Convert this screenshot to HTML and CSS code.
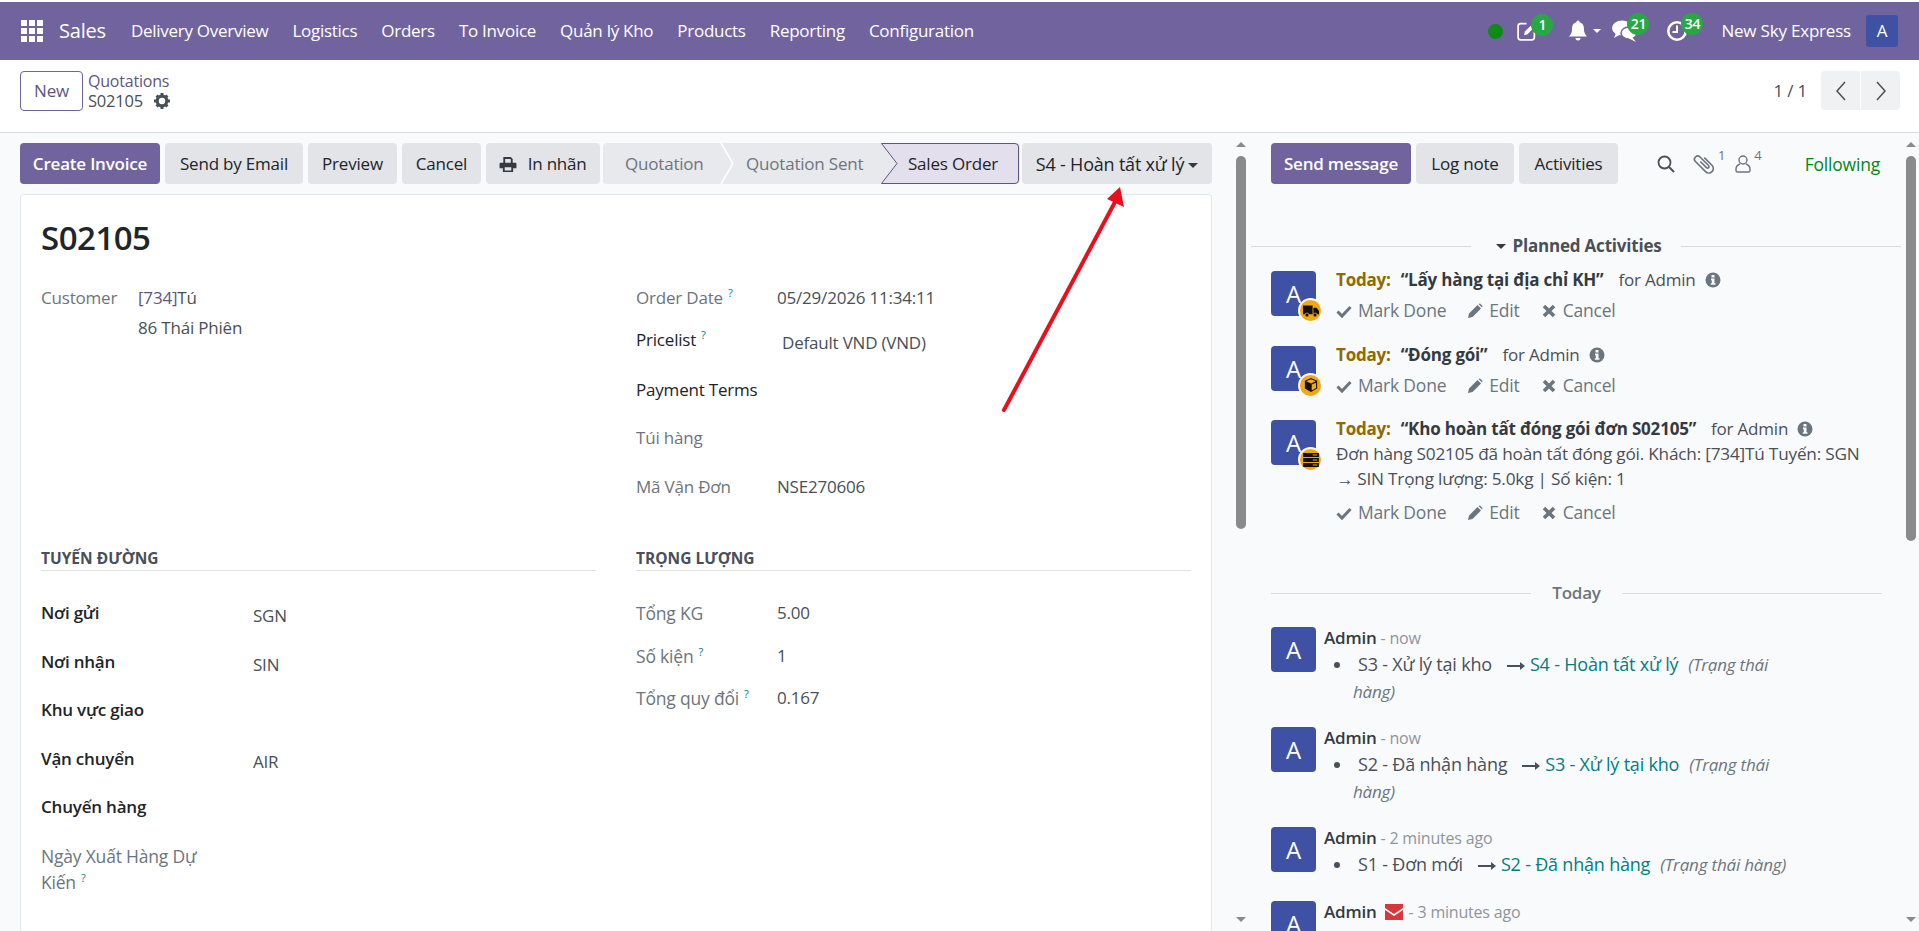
FILE: index.html
```html
<!DOCTYPE html>
<html lang="vi">
<head>
    <meta charset="UTF-8">
    <title>S02105 - Sales</title>
    <link rel="stylesheet" href="styles.css">
</head>
<body>

<svg class="defs" width="0" height="0">
    <symbol id="i-check" viewBox="0 0 16 16"><path d="M1.5 8.5 L6 13 L14.5 4" fill="none" stroke="currentColor" stroke-width="3"/></symbol>
    <symbol id="i-pencil" viewBox="0 0 16 16"><path d="M1 15 L2 10.5 L10.5 2 L14 5.5 L5.5 14 Z M11.5 1 L13 0.5 L15.5 3 L15 4.5 Z" fill="currentColor"/></symbol>
    <symbol id="i-times" viewBox="0 0 16 16"><path d="M3 3 L13 13 M13 3 L3 13" fill="none" stroke="currentColor" stroke-width="3.6"/></symbol>
    <symbol id="i-info" viewBox="0 0 16 16"><circle cx="8" cy="8" r="7.5" fill="currentColor"/><path d="M6.5 3h3v2.4h-3z M6 6.6h3.5v4.6h1v1.6H5.8v-1.6h1v-3H6z" fill="#f9fafc"/></symbol>
    <symbol id="i-long-arrow" viewBox="0 0 18 10"><path d="M0 4h13V1l5 4-5 4V6H0z" fill="currentColor"/></symbol>
</svg>

<header class="navbar">
    <div class="nav-left">
        <svg class="apps" viewBox="0 0 22 22"><path d="M0 0h6v6H0z M8 0h6v6H8z M16 0h6v6h-6z M0 8h6v6H0z M8 8h6v6H8z M16 8h6v6h-6z M0 16h6v6H0z M8 16h6v6H8z M16 16h6v6h-6z" fill="#fff"/></svg>
        <span class="brand">Sales</span>
        <a>Delivery Overview</a>
        <a>Logistics</a>
        <a>Orders</a>
        <a>To Invoice</a>
        <a>Quản lý Kho</a>
        <a>Products</a>
        <a>Reporting</a>
        <a>Configuration</a>
    </div>
    <div class="nav-right">
        <span class="presence"></span>
        <span class="systray tray-activity">
            <svg viewBox="0 0 20 20"><path d="M10 2.500H4.500a2.500 2.500 0 0 0-2.500 2.500v10.500a2.500 2.500 0 0 0 2.500 2.500h10.500a2.500 2.500 0 0 0 2.500-2.500V10" fill="none" stroke="#fff" stroke-width="1.600"/><path d="M7.500 13.500 L8.500 10 L14 4.500 L16.500 7 L11 12.500 Z" fill="#fff"/></svg>
            <b class="count">1</b>
        </span>
        <span class="systray tray-bell">
            <svg viewBox="0 0 20 22"><path d="M10 0a1.6 1.6 0 0 1 1.6 1.8C15 2.6 16 5.5 16 9c0 4 2 5.500 3 7H1c1-1.500 3-3 3-7 0-3.500 1-6.400 4.400-7.200A1.600 1.600 0 0 1 10 0z M7.500 17.500h5a2.500 2.500 0 0 1-5 0z" fill="#fff"/></svg>
            <i class="caret-white"></i>
        </span>
        <span class="systray tray-chat">
            <svg viewBox="0 0 26 22"><ellipse cx="10" cy="8" rx="10" ry="7.500" fill="#fff"/><path d="M4 13 L2 18 L9 14z" fill="#fff"/><ellipse cx="17" cy="13" rx="8" ry="6" fill="#fff" stroke="#71639e" stroke-width="1.500"/><path d="M20 17 L24 22 L16 18z" fill="#fff"/></svg>
            <b class="count">21</b>
        </span>
        <span class="systray tray-clock">
            <svg viewBox="0 0 22 22"><circle cx="11" cy="11" r="8.700" fill="none" stroke="#fff" stroke-width="2.600"/><path d="M10 5.500h2v7.500H6.500v-2H10z" fill="#fff"/></svg>
            <b class="count">34</b>
        </span>
        <span class="company">New Sky Express</span>
        <span class="user-avatar">A</span>
    </div>
</header>

<div class="control-panel">
    <button class="btn-new">New</button>
    <div class="breadcrumb">
        <a>Quotations</a>
        <div class="crumb-current">S02105
            <svg class="cog" viewBox="0 0 16 16"><g fill="#495057"><circle cx="8" cy="8" r="4.800" fill="none" stroke="#495057" stroke-width="3.200"/><path d="M6.500 0h3v3h-3z M6.500 13h3v3h-3z M0 6.500h3v3H0z M13 6.500h3v3h-3z M1.500 3.600l2.100-2.100 2.100 2.100-2.100 2.100z M10.300 12.400l2.100-2.100 2.100 2.100-2.100 2.100z M12.400 1.500l2.100 2.100-2.100 2.100-2.100-2.100z M3.600 10.300l2.100 2.100-2.100 2.100-2.100-2.100z"/></g></svg>
        </div>
    </div>
    <div class="pager">
        <span class="pager-value">1 / 1</span>
        <button class="pager-btn"><svg viewBox="0 0 12 20"><path d="M10 1 L2 10 L10 19" fill="none" stroke="#495057" stroke-width="1.500"/></svg></button>
        <button class="pager-btn"><svg viewBox="0 0 12 20"><path d="M2 1 L10 10 L2 19" fill="none" stroke="#495057" stroke-width="1.500"/></svg></button>
    </div>
</div>

<main class="content">
    <section class="form-pane">
        <div class="actions">
            <button class="btn btn-primary btn-invoice">Create Invoice</button>
            <button class="btn btn-email">Send by Email</button>
            <button class="btn btn-preview">Preview</button>
            <button class="btn btn-cancel">Cancel</button>
            <button class="btn btn-print">
                <svg viewBox="0 0 18 16"><path d="M4 0h8l2 2v4h-2V2.500L11 2H6v4H4z M1 6h16a1 1 0 0 1 1 1v5h-3.500v4h-11v-4H0V7a1 1 0 0 1 1-1z M5.500 11v3.500h7V11z" fill="#343a40" fill-rule="evenodd"/></svg>
                In nhãn
            </button>
            <div class="statusbar">
                <svg class="status-shape" viewBox="0 0 417 41"><path d="M118 0 L130 20.500 L118 41" fill="none" stroke="#fff" stroke-width="1.500"/><path d="M278.500 .5 H412 a3.500 3.500 0 0 1 3.500 3.500 V37 a3.500 3.500 0 0 1-3.500 3.500 H278.500 L294 20.500 Z" fill="#e3dfec" stroke="#5f5680"/></svg>
                <span class="status-item status-first">Quotation</span>
                <span class="status-item status-sent">Quotation Sent</span>
                <span class="status-item status-current">Sales Order</span>
            </div>
            <button class="btn btn-stage">S4 - Hoàn tất xử lý<i class="caret"></i></button>
        </div>

        <div class="sheet">
            <h1>S02105</h1>
            <div class="groups groups-top">
                <div class="group">
                    <div class="row">
                        <label class="customer-label muted">Customer</label>
                        <div class="value">
                            <div><span class="value-ref">[734]</span>Tú</div>
                            <div class="address">86 Thái Phiên</div>
                        </div>
                    </div>
                </div>
                <div class="group">
                    <div class="row row-date">
                        <label class="side-label muted">Order Date<sup>?</sup></label>
                        <div class="value">05/29/2026 11:34:11</div>
                    </div>
                    <div class="row row-pricelist">
                        <label class="side-label">Pricelist<sup>?</sup></label>
                        <div class="value value-select">Default VND (VND)</div>
                    </div>
                    <div class="row row-terms">
                        <label class="side-label">Payment Terms</label>
                    </div>
                    <div class="row row-bag">
                        <label class="side-label muted">Túi hàng</label>
                    </div>
                    <div class="row">
                        <label class="side-label muted">Mã Vận Đơn</label>
                        <div class="value">NSE270606</div>
                    </div>
                </div>
            </div>
            <div class="groups">
                <div class="group route">
                    <h2>TUYẾN ĐƯỜNG</h2>
                    <div class="row"><label class="route-label">Nơi gửi</label><div class="value value-low">SGN</div></div>
                    <div class="row"><label class="route-label">Nơi nhận</label><div class="value value-low">SIN</div></div>
                    <div class="row"><label class="route-label">Khu vực giao</label></div>
                    <div class="row"><label class="route-label">Vận chuyển</label><div class="value value-low">AIR</div></div>
                    <div class="row"><label class="route-label">Chuyến hàng</label></div>
                    <div class="row"><label class="route-label muted wrap-label">Ngày Xuất Hàng Dự Kiến<sup>?</sup></label></div>
                </div>
                <div class="group weight">
                    <h2>TRỌNG LƯỢNG</h2>
                    <div class="row"><label class="side-label muted">Tổng KG</label><div class="value">5.00</div></div>
                    <div class="row"><label class="side-label muted">Số kiện<sup>?</sup></label><div class="value">1</div></div>
                    <div class="row"><label class="side-label muted">Tổng quy đổi<sup>?</sup></label><div class="value">0.167</div></div>
                </div>
            </div>
        </div>
    </section>

    <div class="scrollbar scrollbar-form"><i class="arrow-up"></i><span class="thumb"></span><i class="arrow-down"></i></div>

    <aside class="chatter">
        <div class="chatter-top">
            <button class="btn btn-primary btn-send">Send message</button>
            <button class="btn btn-log">Log note</button>
            <button class="btn btn-activities">Activities</button>
            <div class="chatter-tools">
                <svg class="tool-search" viewBox="0 0 18 18"><circle cx="7.500" cy="7.500" r="6" fill="none" stroke="#495057" stroke-width="1.800"/><path d="M12 12 L17 17" stroke="#495057" stroke-width="2"/></svg>
                <svg class="tool-clip" viewBox="-3 -3 24 24"><path transform="rotate(-45 9 9)" d="M8.200 5 V13 a1.400 1.400 0 0 0 2.800 0 V1.800 a3 3 0 0 0-6 0 V15 a4.200 4.200 0 0 0 8.400 0 V5" fill="none" stroke="#6c757d" stroke-width="1.500"/></svg>
                <span class="tool-count">1</span>
                <svg class="tool-person" viewBox="0 0 16 18"><circle cx="8" cy="5" r="4" fill="none" stroke="#6c757d" stroke-width="1.400"/><path d="M5 9 C2.500 10 1 11.500 1 14 V15.500 Q1 17 2.500 17 H13.500 Q15 17 15 15.500 V14 C15 11.500 13.500 10 11 9" fill="none" stroke="#6c757d" stroke-width="1.400"/></svg>
                <span class="tool-count">4</span>
            </div>
            <span class="following">Following</span>
        </div>

        <div class="divider divider-planned"><span><i class="caret caret-dark"></i>Planned Activities</span></div>

        <div class="activity">
            <div class="avatar">A
                <span class="activity-badge"><svg viewBox="0 0 20 16"><path d="M0 1h12v11H0z M13 4h4l3 4v4h-7z" fill="#111"/><circle cx="5" cy="13" r="2.500" fill="#111" stroke="#f3a712"/><circle cx="15" cy="13" r="2.500" fill="#111" stroke="#f3a712"/></svg></span>
            </div>
            <div class="activity-body">
                <div><strong class="today">Today:</strong><strong class="summary">“Lấy hàng tại địa chỉ KH”</strong><span class="assignee">for Admin</span><svg class="info"><use href="#i-info"/></svg></div>
                <div class="activity-actions"><a><svg><use href="#i-check"/></svg>Mark Done</a><a><svg><use href="#i-pencil"/></svg>Edit</a><a><svg><use href="#i-times"/></svg>Cancel</a></div>
            </div>
        </div>
        <div class="activity">
            <div class="avatar">A
                <span class="activity-badge"><svg viewBox="0 0 16 16"><path d="M8 0l7 3v9l-7 4-7-4V3z" fill="#111"/><path d="M2.500 3.800L8 6.200l5.500-2.400L8 1.500z" fill="#f3a712"/><path d="M8.800 7.500v6.800l5-2.900V5.300z" fill="#f3a712"/></svg></span>
            </div>
            <div class="activity-body">
                <div><strong class="today">Today:</strong><strong class="summary">“Đóng gói”</strong><span class="assignee">for Admin</span><svg class="info"><use href="#i-info"/></svg></div>
                <div class="activity-actions"><a><svg><use href="#i-check"/></svg>Mark Done</a><a><svg><use href="#i-pencil"/></svg>Edit</a><a><svg><use href="#i-times"/></svg>Cancel</a></div>
            </div>
        </div>
        <div class="activity activity-long">
            <div class="avatar">A
                <span class="activity-badge"><svg viewBox="0 0 18 16"><path d="M0 0h18v4.500H0z M0 5.700h18v4.600H0z M0 11.500h18V16H0z" fill="#111"/><path d="M11 1.600h5v1.300h-5z M11 7.400h5v1.300h-5z M11 13.100h5v1.300h-5z" fill="#f3a712"/></svg></span>
            </div>
            <div class="activity-body">
                <div><strong class="today">Today:</strong><strong class="summary">“Kho hoàn tất đóng gói đơn S02105”</strong><span class="assignee">for Admin</span><svg class="info"><use href="#i-info"/></svg></div>
                <div class="activity-note">Đơn hàng S02105 đã hoàn tất đóng gói. Khách: [734]Tú Tuyến: SGN → SIN Trọng lượng: 5.0kg | Số kiện: 1</div>
                <div class="activity-actions"><a><svg><use href="#i-check"/></svg>Mark Done</a><a><svg><use href="#i-pencil"/></svg>Edit</a><a><svg><use href="#i-times"/></svg>Cancel</a></div>
            </div>
        </div>

        <div class="divider divider-today"><span>Today</span></div>

        <div class="message">
            <div class="avatar">A</div>
            <div class="message-body">
                <div><strong class="author">Admin</strong><span class="when"> - now</span></div>
                <ul><li><span class="old">S3 - Xử lý tại kho</span><svg class="long-arrow"><use href="#i-long-arrow"/></svg><span class="new">S4 - Hoàn tất xử lý</span><em>(Trạng thái hàng)</em></li></ul>
            </div>
        </div>
        <div class="message">
            <div class="avatar">A</div>
            <div class="message-body">
                <div><strong class="author">Admin</strong><span class="when"> - now</span></div>
                <ul><li><span class="old">S2 - Đã nhận hàng</span><svg class="long-arrow"><use href="#i-long-arrow"/></svg><span class="new">S3 - Xử lý tại kho</span><em>(Trạng thái hàng)</em></li></ul>
            </div>
        </div>
        <div class="message message-short">
            <div class="avatar">A</div>
            <div class="message-body">
                <div><strong class="author">Admin</strong><span class="when"> - 2 minutes ago</span></div>
                <ul><li><span class="old">S1 - Đơn mới</span><svg class="long-arrow"><use href="#i-long-arrow"/></svg><span class="new">S2 - Đã nhận hàng</span><em>(Trạng thái hàng)</em></li></ul>
            </div>
        </div>
        <div class="message">
            <div class="avatar">A</div>
            <div class="message-body">
                <div><strong class="author">Admin</strong><svg class="mail" viewBox="0 0 18 16"><path d="M0 0h18v4l-9 6-9-6z M0 6l9 6 9-6v10H0z" fill="#d9363e"/></svg><span class="when">- 3 minutes ago</span></div>
            </div>
        </div>
    </aside>

    <div class="scrollbar scrollbar-chatter"><i class="arrow-up"></i><span class="thumb"></span><i class="arrow-down"></i></div>
</main>

<svg class="annotation" viewBox="0 0 140 240"><path d="M4 226 L115 18" stroke="#ea0f1c" stroke-width="4" stroke-linecap="round"/><path d="M120 3 L124 23 L107 15 Z" fill="#ea0f1c"/></svg>

</body>
</html>
```

FILE: styles.css
```css
* {
    box-sizing: border-box;
}
html, body {
    height: 931px;
    margin: 0;
    overflow: hidden;
}
body {
    position: relative;
    padding-top: 2px;
    background: #fff;
    font-family: "Open Sans", "Noto Sans", sans-serif;
    font-size: 17px;
    letter-spacing: -0.2px;
    line-height: 26px;
    color: #495057;
}
button {
    font: inherit;
    letter-spacing: inherit;
    border: none;
}
sup {
    font-size: 11px;
    line-height: 0;
    color: #017e84;
    margin-left: 5px;
    vertical-align: 7px;
}
.defs {
    position: absolute;
}

/* navbar */
.navbar {
    height: 58px;
    display: flex;
    justify-content: space-between;
    align-items: center;
    background: #71639e;
    color: #fff;
}
.nav-left {
    display: flex;
    align-items: center;
    padding-left: 21px;
}
.nav-left a {
    padding: 0 12px;
    letter-spacing: -0.27px;
}
.apps {
    width: 22px;
    height: 22px;
}
.brand {
    font-size: 20px;
    margin: 0 13px 0 16px;
}
.nav-right {
    display: flex;
    align-items: center;
    padding-right: 21px;
}
.presence {
    width: 15px;
    height: 15px;
    border-radius: 50%;
    background: #0e8a16;
    margin-right: 13px;
}
.systray {
    position: relative;
    display: flex;
    align-items: center;
}
.systray svg {
    display: block;
}
.tray-activity {
    width: 52px;
}
.tray-activity svg {
    width: 21px;
    height: 21px;
}
.tray-bell {
    width: 44px;
}
.tray-bell svg {
    width: 20px;
    height: 23px;
}
.tray-chat {
    width: 54px;
}
.tray-chat svg {
    width: 26px;
    height: 22px;
}
.tray-clock {
    width: 55px;
}
.tray-clock svg {
    width: 22px;
    height: 22px;
}
.caret-white {
    margin-left: 5px;
    border: 4px solid transparent;
    border-top-color: #fff;
    border-bottom: 0;
}
.count {
    position: absolute;
    top: -7px;
    left: 15px;
    min-width: 22px;
    height: 22px;
    padding: 0 3px;
    border-radius: 11px;
    background: #28a745;
    color: #fff;
    font-size: 14px;
    font-weight: 600;
    line-height: 22px;
    text-align: center;
    letter-spacing: -0.3px;
}
.company {
    margin-right: 15px;
}
.user-avatar {
    width: 32px;
    height: 32px;
    border-radius: 3px;
    background: #3f51a5;
    text-align: center;
    line-height: 32px;
}

/* control panel */
.control-panel {
    height: 73px;
    padding: 11px 19px 0 20px;
    display: flex;
    align-items: flex-start;
    border-bottom: 1px solid #d8dadd;
}
.btn-new {
    width: 63px;
    height: 40px;
    background: #fff;
    border: 1px solid #71639e;
    border-radius: 4px;
    color: #5f5680;
}
.breadcrumb {
    margin-left: 5px;
    line-height: 20px;
    font-size: 16px;
    color: #495057;
}
.breadcrumb a {
    display: block;
    color: #5f5680;
    font-weight: 500;
}
.crumb-current {
    display: flex;
    align-items: center;
    font-size: 16.5px;
}
.cog {
    width: 16px;
    height: 16px;
    margin-left: 11px;
}
.pager {
    margin-left: auto;
    display: flex;
    align-items: center;
    height: 39px;
}
.pager-value {
    margin-right: 13px;
}
.pager-btn {
    width: 39px;
    height: 39px;
    margin-left: 1px;
    background: #f0f1f3;
    padding: 0;
}
.pager-btn:first-of-type {
    border-radius: 4px 0 0 4px;
}
.pager-btn:last-of-type {
    border-radius: 0 4px 4px 0;
}
.pager-btn svg {
    display: block;
    width: 12px;
    height: 20px;
    margin: 0 auto;
}

/* main */
.content {
    height: 798px;
    display: flex;
    background: #f9fafb;
}
.form-pane {
    width: 1233px;
    padding: 10px 0 0 20px;
    overflow: hidden;
}
.actions {
    display: flex;
    gap: 5px;
    height: 41px;
    margin-bottom: 10px;
}
.btn {
    height: 41px;
    padding: 0;
    border-radius: 4px;
    background: #e2e4e8;
    color: #212529;
    font-weight: 500;
    white-space: nowrap;
}
.btn-primary {
    background: #71639e;
    color: #fff;
    font-weight: 600;
}
.btn-invoice { width: 140px; }
.btn-email { width: 138px; }
.btn-preview { width: 89px; }
.btn-cancel { width: 79px; }
.btn-print { width: 114px; }
.btn-print svg {
    width: 18px;
    height: 15px;
    margin-right: 6px;
    vertical-align: -2px;
}
.statusbar {
    position: relative;
    width: 417px;
    height: 41px;
    margin-left: -2px;
    display: flex;
    background: #e7e9ed;
    border-radius: 4px;
    line-height: 41px;
    font-weight: 500;
    color: #6f757c;
}
.status-shape {
    position: absolute;
    left: 0;
    top: 0;
    width: 417px;
    height: 41px;
}
.status-item {
    position: relative;
    flex: none;
}
.status-first {
    width: 143px;
    padding-left: 22px;
}
.status-sent {
    width: 162px;
}
.status-current {
    color: #212529;
}
.btn-stage {
    width: 190px;
    margin-left: -3px;
    font-size: 18px;
}
.caret {
    display: inline-block;
    margin-left: 4px;
    border: 5px solid transparent;
    border-top-color: #343a40;
    border-bottom: 0;
    vertical-align: 3px;
}

/* sheet */
.sheet {
    width: 1192px;
    height: 760px;
    padding: 21px 20px 0;
    background: #fff;
    border: 1px solid #e5e7ea;
    border-bottom: 0;
    border-radius: 4px 4px 0 0;
}
h1 {
    margin: 0;
    font-size: 33px;
    line-height: 44px;
    font-weight: 600;
    color: #212529;
    letter-spacing: -0.5px;
}
.groups {
    display: grid;
    grid-template-columns: 555px 555px;
    column-gap: 40px;
}
.groups-top {
    height: 261px;
    margin-top: 25px;
}
h2 {
    margin: 0 0 29px;
    height: 25px;
    font-size: 15.5px;
    line-height: 25px;
    font-weight: 700;
    color: #495057;
    border-bottom: 1px solid #dfe1e4;
    letter-spacing: 0;
}
.row {
    display: flex;
    align-items: flex-start;
    margin-bottom: 23px;
}
label {
    flex: none;
    font-weight: 500;
    color: #212529;
}
label.muted {
    color: #6c757d;
}
.customer-label {
    width: 97px;
}
.side-label {
    width: 141px;
}
.route-label {
    width: 212px;
    font-weight: 600;
}
.wrap-label {
    width: 170px;
    font-size: 17.5px;
    font-weight: 500;
}
.value-ref {
    color: #5f5680;
}
.address {
    margin-top: 4px;
}
.value-select {
    padding: 3px 0 0 5px;
}
.value-low {
    padding-top: 3px;
}
.row-date {
    margin-bottom: 16px;
}
.row-pricelist {
    margin-bottom: 21px;
}
.row-terms {
    margin-bottom: 22px;
}
.route .row {
    height: 26px;
    margin-bottom: 22.5px;
}
.route .row:last-child {
    height: 52px;
}
.weight .row {
    margin-bottom: 16.5px;
}
.weight label {
    font-size: 17.5px;
}

/* scrollbars */
.scrollbar {
    width: 16px;
    padding: 9px 3px 9px;
    display: flex;
    flex-direction: column;
    align-items: center;
    flex: none;
}
.thumb {
    width: 10px;
    height: 373px;
    margin-top: 9px;
    border-radius: 5px;
    background: #8a8a8a;
}
.scrollbar-chatter .thumb {
    height: 385px;
}
.arrow-up {
    border: 5px solid transparent;
    border-bottom-color: #8a8a8a;
    border-top: 0;
}
.arrow-down {
    margin-top: auto;
    border: 5px solid transparent;
    border-top-color: #8a8a8a;
    border-bottom: 0;
}

/* chatter */
.chatter {
    width: 654px;
    height: 798px;
    overflow: hidden;
    padding: 10px 0 0;
    background: #f9fafc;
}
.chatter-top {
    display: flex;
    gap: 5px;
    height: 41px;
    padding-left: 22px;
    align-items: center;
}
.btn-send { width: 140px; }
.btn-log { width: 98px; }
.btn-activities { width: 99px; }
.chatter-tools {
    display: flex;
    align-items: center;
    margin-left: 34px;
}
.tool-search {
    width: 18px;
    height: 18px;
    margin-right: 18px;
}
.tool-clip {
    width: 26px;
    height: 26px;
    margin: 0 -2px;
}
.tool-person {
    width: 16px;
    height: 18px;
    margin-left: 10px;
}
.tool-count {
    align-self: flex-start;
    margin: -3px 0 0 3px;
    color: #6c757d;
    font-size: 13px;
    line-height: 14px;
}
.following {
    margin-left: auto;
    margin-right: 23px;
    color: #008818;
    font-size: 17.5px;
    font-weight: 500;
}
.divider {
    display: flex;
    align-items: center;
    font-weight: 600;
    color: #495057;
}
.divider::before, .divider::after {
    content: "";
    flex: 1;
    height: 1px;
    background: #d8dadd;
}
.divider-planned {
    margin: 49px 0 10px;
    padding: 0 2px;
    font-weight: 700;
}
.divider-planned span {
    padding: 0 19px 0 25px;
}
.divider-today {
    margin: 55px 21px 19px 22px;
    color: #6c757d;
}
.divider-today span {
    padding: 0 21px;
}
.caret-dark {
    margin: 0 6px 0 0;
}
.activity {
    display: flex;
    height: 74.5px;
    padding-left: 22px;
}
.activity-long {
    height: auto;
}
.avatar {
    position: relative;
    flex: none;
    width: 45px;
    height: 45px;
    margin-top: 2px;
    border-radius: 4px;
    background: #3f51a5;
    color: #fff;
    font-size: 24px;
    line-height: 45px;
    text-align: center;
    letter-spacing: 0;
}
.activity-badge {
    position: absolute;
    left: 27px;
    top: 27px;
    width: 25px;
    height: 25px;
    display: flex;
    align-items: center;
    justify-content: center;
    border: 2px solid #f9fafc;
    border-radius: 50%;
    background: #f3a712;
}
.activity-badge svg {
    width: 16px;
    height: 14px;
}
.activity-body {
    margin: -2px 0 0 20px;
    line-height: 25px;
    width: 528px;
}
.today {
    color: #8f6a00;
    font-weight: 700;
    margin-right: 10px;
}
.summary {
    color: #343a40;
    font-weight: 700;
    margin-right: 15px;
}
.info {
    width: 16px;
    height: 16px;
    margin-left: 9px;
    color: #6c757d;
    vertical-align: -2px;
}
.activity-note {
    color: #495057;
    font-size: 17.2px;
}
.activity-note + .activity-actions {
    margin-top: 9px;
}
.activity-actions {
    display: flex;
    gap: 21px;
    margin-top: 6px;
    color: #6c757d;
    font-size: 17.5px;
}
.activity-actions svg {
    width: 16px;
    height: 16px;
    margin-right: 6px;
    vertical-align: -2px;
}
.message {
    display: flex;
    padding-left: 22px;
    margin-bottom: 20px;
}
.message-short {
    margin-bottom: 21px;
}
.message-body {
    margin-left: 8px;
    width: 470px;
}
.author {
    font-weight: 600;
    color: #343a40;
}
.when {
    color: #8e959b;
    font-size: 16px;
}
.mail {
    width: 18px;
    height: 16px;
    margin: 0 6px 0 8px;
    vertical-align: -2px;
}
ul {
    margin: 0;
    padding-left: 29px;
}
li {
    font-size: 18px;
}
li::marker {
    color: #495057;
}
.old {
    margin-left: 5px;
}
.long-arrow {
    width: 18px;
    height: 10px;
    margin: 0 0 0 15px;
    color: #495057;
}
.new {
    color: #017e84;
    font-weight: 500;
    margin-left: 5px;
}
em {
    margin-left: 10px;
    color: #6c757d;
    font-size: 17px;
}

/* red arrow drawn over the screenshot */
.annotation {
    position: absolute;
    left: 1000px;
    top: 184px;
    width: 140px;
    height: 240px;
}
```
